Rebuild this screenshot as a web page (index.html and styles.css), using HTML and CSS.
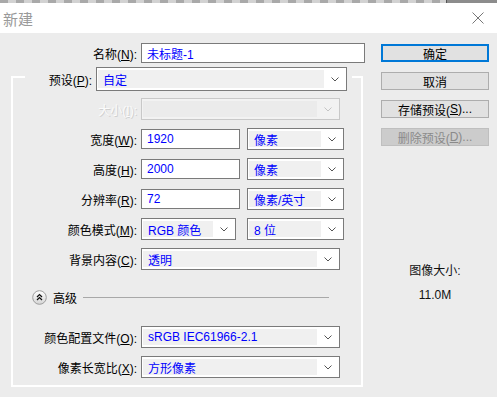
FILE: index.html
```html
<!DOCTYPE html>
<html>
<head>
  <meta charset="UTF-8">
  <title>新建</title>
  <link rel="stylesheet" href="styles.css">
</head>
<body>
  <div class="top-strip">
    <div class="checker"></div>
    <div class="strip-dark"></div>
  </div>

  <div class="titlebar">
    <span class="title">新建</span>
    <svg class="close" width="12" height="12" viewBox="0 0 12 12">
      <path d="M0.5 0.5 L11.5 11.5 M11.5 0.5 L0.5 11.5" stroke="#777" stroke-width="1" fill="none"/>
    </svg>
  </div>

  <div class="dialog">
    <div class="main">
      <div class="name-row">
        <label class="lbl">名称(<u>N</u>):</label>
        <div class="input wide">未标题-1</div>
      </div>

      <div class="group">
        <div class="legend">
          <label class="lbl legend-lbl">预设(<u>P</u>):</label>
          <div class="select preset">
            <span class="val">自定</span>
            <span class="arrow"><svg width="8" height="5" viewBox="0 0 8 5"><path d="M0.5 0.5 L4 4 L7.5 0.5" stroke="#555" fill="none"/></svg></span>
          </div>
        </div>

        <div class="row first">
          <label class="lbl disabled">大小(<u>I</u>):</label>
          <div class="select full off">
            <span class="val"></span>
            <span class="arrow"><svg width="8" height="5" viewBox="0 0 8 5"><path d="M0.5 0.5 L4 4 L7.5 0.5" stroke="#c4c4c4" fill="none"/></svg></span>
          </div>
        </div>

        <div class="row">
          <label class="lbl">宽度(<u>W</u>):</label>
          <div class="input num">1920</div>
          <div class="select unit">
            <span class="val">像素</span>
            <span class="arrow"><svg width="8" height="5" viewBox="0 0 8 5"><path d="M0.5 0.5 L4 4 L7.5 0.5" stroke="#555" fill="none"/></svg></span>
          </div>
        </div>

        <div class="row">
          <label class="lbl">高度(<u>H</u>):</label>
          <div class="input num">2000</div>
          <div class="select unit">
            <span class="val">像素</span>
            <span class="arrow"><svg width="8" height="5" viewBox="0 0 8 5"><path d="M0.5 0.5 L4 4 L7.5 0.5" stroke="#555" fill="none"/></svg></span>
          </div>
        </div>

        <div class="row">
          <label class="lbl">分辨率(<u>R</u>):</label>
          <div class="input num">72</div>
          <div class="select unit">
            <span class="val">像素/英寸</span>
            <span class="arrow"><svg width="8" height="5" viewBox="0 0 8 5"><path d="M0.5 0.5 L4 4 L7.5 0.5" stroke="#555" fill="none"/></svg></span>
          </div>
        </div>

        <div class="row">
          <label class="lbl">颜色模式(<u>M</u>):</label>
          <div class="select mode">
            <span class="val">RGB 颜色</span>
            <span class="arrow"><svg width="8" height="5" viewBox="0 0 8 5"><path d="M0.5 0.5 L4 4 L7.5 0.5" stroke="#555" fill="none"/></svg></span>
          </div>
          <div class="select unit">
            <span class="val">8 位</span>
            <span class="arrow"><svg width="8" height="5" viewBox="0 0 8 5"><path d="M0.5 0.5 L4 4 L7.5 0.5" stroke="#555" fill="none"/></svg></span>
          </div>
        </div>

        <div class="row">
          <label class="lbl">背景内容(<u>C</u>):</label>
          <div class="select full">
            <span class="val">透明</span>
            <span class="arrow"><svg width="8" height="5" viewBox="0 0 8 5"><path d="M0.5 0.5 L4 4 L7.5 0.5" stroke="#555" fill="none"/></svg></span>
          </div>
        </div>

        <div class="advanced">
          <svg class="adv-icon" width="15" height="15" viewBox="0 0 15 15">
            <defs>
              <linearGradient id="advFill" x1="0" y1="0" x2="0" y2="1">
                <stop offset="0" stop-color="#ffffff"/>
                <stop offset="1" stop-color="#d4d4d4"/>
              </linearGradient>
            </defs>
            <circle cx="7.5" cy="7.5" r="6.8" fill="url(#advFill)" stroke="#9c9c9c"/>
            <path d="M5 7 L7.5 4.6 L10 7 M5 10 L7.5 7.6 L10 10" stroke="#111" stroke-width="1.3" fill="none"/>
          </svg>
          <span class="adv-text">高级</span>
          <span class="adv-line"></span>
        </div>

        <div class="row profile">
          <label class="lbl">颜色配置文件(<u>O</u>):</label>
          <div class="select full">
            <span class="val">sRGB IEC61966-2.1</span>
            <span class="arrow"><svg width="8" height="5" viewBox="0 0 8 5"><path d="M0.5 0.5 L4 4 L7.5 0.5" stroke="#555" fill="none"/></svg></span>
          </div>
        </div>

        <div class="row">
          <label class="lbl">像素长宽比(<u>X</u>):</label>
          <div class="select full">
            <span class="val">方形像素</span>
            <span class="arrow"><svg width="8" height="5" viewBox="0 0 8 5"><path d="M0.5 0.5 L4 4 L7.5 0.5" stroke="#555" fill="none"/></svg></span>
          </div>
        </div>
      </div>
    </div>

    <div class="side">
      <div class="btn default">确定</div>
      <div class="btn">取消</div>
      <div class="btn">存储预设(<u>S</u>)...</div>
      <div class="btn off">删除预设(<u>D</u>)...</div>

      <div class="info">
        <div class="info-title">图像大小:</div>
        <div class="info-value">11.0M</div>
      </div>
    </div>
  </div>
</body>
</html>
```

FILE: styles.css
```css
body {
  margin: 0;
  width: 497px;
  height: 397px;
  overflow: hidden;
  background-color: #ececec;
  font-family: "Liberation Sans", "Noto Sans CJK SC", sans-serif;
  font-size: 12px;
  color: #000;
}

u {
  text-decoration: underline;
  text-underline-offset: 1px;
}

.top-strip {
  display: flex;
  height: 3px;
}

.checker {
  flex: 1;
  background: repeating-linear-gradient(90deg, #a9a9a9 0 8px, #d2d2d2 8px 16px);
}

.strip-dark {
  width: 50px;
  background-color: #8c8c8c;
  border-left: 1px solid #555;
}

.titlebar {
  height: 30px;
  background-color: #fff;
  display: flex;
  align-items: center;
  justify-content: space-between;
  padding: 0 13px 0 3px;
}

.title {
  font-family: "Noto Sans CJK SC", sans-serif;
  font-size: 15px;
  color: #9a9a9a;
}

.close {
  display: block;
}

.dialog {
  display: flex;
  padding-top: 10px;
}

.main {
  width: 365px;
}

.lbl {
  flex: none;
  text-align: right;
  white-space: nowrap;
}

.lbl.disabled {
  color: #fbfbfb;
  text-shadow: 1px 1px 0 #d0d0d0;
}

.name-row {
  display: flex;
  align-items: center;
  gap: 4px;
  height: 20px;
}

.name-row .lbl {
  width: 137px;
}

.input {
  box-sizing: border-box;
  height: 20px;
  border: 1px solid #7a7a7a;
  background-color: #fff;
  color: #0000ff;
  padding-left: 5px;
  display: flex;
  align-items: center;
}

.input.wide {
  width: 225px;
}

.input.num {
  width: 99px;
}

.group {
  box-sizing: border-box;
  width: 352px;
  margin: 13px 0 0 11px;
  border: 2px solid #fff;
  padding-bottom: 3px;
}

.legend {
  display: flex;
  align-items: center;
  gap: 4px;
  height: 24px;
  margin: -11px 9px 0 12px;
  padding-right: 5px;
  background-color: #ececec;
}

.legend-lbl {
  width: 67px;
}

.select {
  box-sizing: border-box;
  height: 22px;
  display: flex;
  border: 1px solid #7a7a7a;
  background-color: #fff;
  padding: 2px 0 2px 1px;
}

.select .val {
  flex: 1;
  background-color: #f0f0f0;
  color: #0000ff;
  padding-left: 5px;
  display: flex;
  align-items: center;
  white-space: nowrap;
  overflow: hidden;
}

.select .arrow {
  width: 22px;
  display: flex;
  align-items: center;
  justify-content: center;
}

.select.preset {
  width: 251px;
  height: 24px;
}

.select.full {
  width: 199px;
}

.select.unit {
  width: 97px;
  margin-left: 3px;
}

.select.mode {
  width: 95px;
  margin-right: 4px;
}

.select.off {
  border-color: #c8c8c8;
  background-color: #f2f2f2;
}

.select.off .val {
  background-color: #ebebeb;
}

.row {
  display: flex;
  align-items: center;
  gap: 4px;
  height: 30px;
}

.row.first {
  margin-top: 3px;
}

.row .lbl {
  width: 124px;
}

.row.profile {
  margin-top: 10px;
}

.advanced {
  display: flex;
  align-items: center;
  height: 30px;
  margin-top: 8px;
  padding-left: 19px;
}

.adv-icon {
  display: block;
  flex: none;
}

.adv-text {
  font-family: "Noto Sans CJK SC", sans-serif;
  margin-left: 6px;
}

.adv-line {
  width: 246px;
  margin-left: 6px;
  border-top: 1px solid #a8a8a8;
}

.side {
  width: 108px;
  margin-left: 16px;
  padding-top: 1px;
  display: flex;
  flex-direction: column;
  gap: 10px;
}

.btn {
  box-sizing: border-box;
  height: 18px;
  border: 1px solid #adadad;
  background-color: #e1e1e1;
  display: flex;
  align-items: center;
  justify-content: center;
  white-space: nowrap;
}

.btn.default {
  border: 2px solid #0078d7;
}

.btn.off {
  background-color: #cccccc;
  border-color: #bfbfbf;
  color: #8a8a8a;
}

.info {
  margin-top: 107px;
  text-align: center;
  color: #111;
}

.info-title {
  line-height: 16px;
}

.info-value {
  line-height: 16px;
  margin-top: 8px;
}
```
